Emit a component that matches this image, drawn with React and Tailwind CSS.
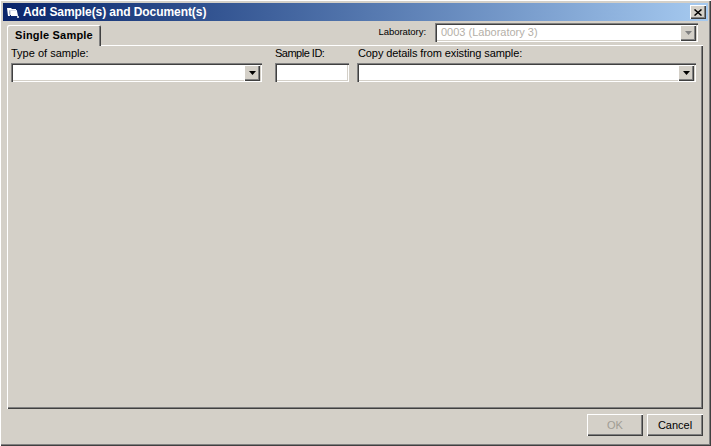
const bevelUp = "shadow-[inset_1px_1px_0_#ffffff,inset_-1px_-1px_0_#404040,inset_-2px_-2px_0_#808080]";
const sunken = "shadow-[inset_1px_1px_0_#808080,inset_2px_2px_0_#404040,inset_-1px_-1px_0_#ffffff,inset_-2px_-2px_0_#d4d0c8]";

function Arrow({ disabled }) {
  return (
    <div className={`w-4 h-4 bg-[#d4d0c8] flex items-center justify-center ${bevelUp}`}>
      <svg width="7" height="4" viewBox="0 0 7 4">
        <path d="M0 0h7L3.5 4z" fill={disabled ? "#808080" : "#000000"} />
      </svg>
    </div>
  );
}

function Combo({ className = "", text, disabled }) {
  return (
    <div className={`h-[19px] flex items-center justify-between bg-white pl-[6px] pr-[2px] ${sunken} ${className}`}>
      <span className="text-[11px] leading-none text-[#b4b0a8]">{text}</span>
      <Arrow disabled={disabled} />
    </div>
  );
}

function Button({ children, disabled }) {
  return (
    <div className={`w-14 h-[22px] flex items-center justify-center text-[11px] bg-[#d4d0c8] ${bevelUp} ${disabled ? "text-[#a09c94]" : "text-black"}`}>
      {children}
    </div>
  );
}

export default function App() {
  return (
    <div className="w-[711px] h-[446px] bg-[#d4d0c8] flex flex-col pt-[3px] pl-[3px] pr-[3px] pb-[2px] shadow-[inset_1px_1px_0_#ffffff,inset_-1px_-1px_0_#404040,inset_-2px_-2px_0_#808080] font-['Liberation_Sans',sans-serif] text-black overflow-hidden">
      <div className="h-[18px] shrink-0 flex items-center justify-between pl-[4px] pr-[2px] bg-gradient-to-r from-[#0a246a] to-[#a6caf0]">
        <div className="flex items-center gap-[4px]">
          <svg width="12" height="11" viewBox="0 0 12 11">
            <path d="M0 1h4l1 1h4v1H2l1 6H1z" fill="#ffffff" />
            <path d="M2 3h8v5H3z" fill="#d8dce8" />
            <path d="M4 4h6l1 5H4z" fill="#ffffff" />
            <path d="M10 9h2v2h-2z" fill="#c0c8d8" />
          </svg>
          <span className="text-[12px] font-bold text-white leading-none tracking-[-0.07px]">Add Sample(s) and Document(s)</span>
        </div>
        <div className={`w-4 h-[14px] bg-[#d4d0c8] flex items-center justify-center ${bevelUp}`}>
          <svg width="8" height="7" viewBox="0 0 8 7">
            <path d="M0.5 0.5L7.5 6.5M7.5 0.5L0.5 6.5" stroke="#000000" strokeWidth="1.5" />
          </svg>
        </div>
      </div>

      <div className="h-[25px] shrink-0 flex items-end pl-[4px] pr-[10px] -mb-px">
        <div className="relative z-10 w-[94px] h-[21px] bg-[#d4d0c8] flex items-center justify-center text-[11px] font-bold tracking-[0.2px] rounded-t-[2px] shadow-[inset_1px_1px_0_#ffffff,inset_-1px_0_0_#404040,inset_-2px_0_0_#808080]">
          Single Sample
        </div>
        <div className="ml-auto self-start flex items-center mt-[2px]">
          <span className="text-[9.5px] mr-[9px] tracking-[-0.05px]">Laboratory:</span>
          <Combo className="w-[263px]" text="0003 (Laboratory 3)" disabled />
        </div>
      </div>

      <div className="w-[696px] h-[364px] ml-[4px] shrink-0 pl-[4px] pt-[1px] shadow-[inset_1px_1px_0_#ffffff,inset_-1px_-1px_0_#404040,inset_-2px_-2px_0_#808080] flex gap-[13px]">
        <div className="w-[251px]">
          <div className="text-[11px] leading-[14px] h-[17px]">Type of sample:</div>
          <Combo />
        </div>
        <div className="w-[74px]">
          <div className="text-[11px] leading-[14px] h-[17px] tracking-[-0.5px]">Sample ID:</div>
          <div className={`h-[19px] bg-white ${sunken}`} />
        </div>
        <div className="w-[339px] -ml-[5px]">
          <div className="text-[11px] leading-[14px] h-[17px] pl-px tracking-[-0.1px]">Copy details from existing sample:</div>
          <Combo />
        </div>
      </div>

      <div className="flex justify-end gap-1 pt-[5px] pr-[5px]">
        <Button disabled>OK</Button>
        <Button>Cancel</Button>
      </div>
    </div>
  );
}
